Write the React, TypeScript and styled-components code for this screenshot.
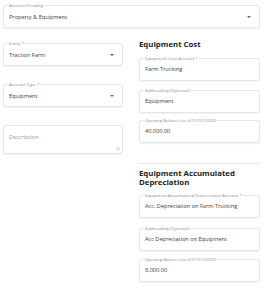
import styled, { createGlobalStyle } from 'styled-components';

const GlobalStyle = createGlobalStyle`
    body {
        margin: 0;
        background: #fff;
        font-family: 'Open Sans', 'Noto Sans', sans-serif;
        color: #333;
    }
`;

const Page = styled.div`
    width: 267px;
    height: 288px;
    box-sizing: border-box;
    padding: 5px 7px 0 3px;
    display: flex;
    flex-direction: column;
    overflow: hidden;
`;

const Columns = styled.div`
    display: grid;
    grid-template-columns: 120px 1fr;
    column-gap: 16px;
    margin-top: 12px;
`;

const Column = styled.div<{ $pt?: number }>`
    display: flex;
    flex-direction: column;
    padding-top: ${(p) => p.$pt ?? 0}px;
`;

const Box = styled.div<{ $mt?: number; $h?: number }>`
    position: relative;
    box-sizing: border-box;
    height: ${(p) => p.$h ?? 23}px;
    margin-top: ${(p) => p.$mt ?? 0}px;
    border: 1px solid #e6e6e6;
    border-radius: 3px;
    box-shadow: 0 0.5px 1.5px rgba(0, 0, 0, 0.06);
    display: flex;
    align-items: center;
    padding: 0 8px 0 5px;
    background: #fff;
`;

const Label = styled.span`
    position: absolute;
    top: -3px;
    left: 4px;
    padding: 0 1px;
    background: #fff;
    font-size: 4.3px;
    line-height: 5px;
    color: #8a8a8a;
    white-space: nowrap;
`;

const Value = styled.span`
    flex: 1;
    font-size: 5.6px;
    line-height: 8px;
    color: #3a3a3a;
    white-space: nowrap;
`;

const Placeholder = styled.span`
    position: absolute;
    top: 7px;
    left: 5px;
    font-size: 5.6px;
    line-height: 8px;
    color: #9a9a9a;
`;

const Arrow = styled.span`
    width: 0;
    height: 0;
    border-left: 2px solid transparent;
    border-right: 2px solid transparent;
    border-top: 2px solid #666;
`;

const Grip = styled.svg`
    position: absolute;
    right: 2px;
    bottom: 2px;
`;

const Heading = styled.h2<{ $mt?: number }>`
    margin: ${(p) => p.$mt ?? 0}px 0 0;
    font-size: 7.8px;
    line-height: 9.5px;
    font-weight: 700;
    color: #222;
`;

const Divider = styled.hr`
    margin: 20px 0 0;
    border: none;
    border-top: 1px solid #e8e8e8;
`;

interface FieldProps {
    label: string;
    value: string;
    select?: boolean;
    mt?: number;
}

const Field = ({ label, value, select, mt }: FieldProps) => (
    <Box $mt={mt}>
        <Label>{label}</Label>
        <Value>{value}</Value>
        {select && <Arrow />}
    </Box>
);

const App = () => {
    return (
        <Page>
            <GlobalStyle />
            <Field label="Account Heading" value="Property & Equipment" select />
            <Columns>
                <Column $pt={3}>
                    <Field label="Entity *" value="Traction Farm" select />
                    <Field label="Account Type *" value="Equipment" select mt={18} />
                    <Box $mt={18} $h={29}>
                        <Placeholder>Description</Placeholder>
                        <Grip width="5" height="5" viewBox="0 0 5 5">
                            <path d="M4.5 1 L1 4.5 M4.5 3 L3 4.5" stroke="#999" strokeWidth="0.6" />
                        </Grip>
                    </Box>
                </Column>
                <Column>
                    <Heading>Equipment Cost</Heading>
                    <Field label="Equipment Cost Account *" value="Farm Trucking" mt={8} />
                    <Field label="Subheading (Optional)" value="Equipment" mt={9} />
                    <Field label="Opening Balance (as of 01/01/2020)" value="40,000.00" mt={7} />
                    <Divider />
                    <Heading $mt={5}>
                        Equipment Accumulated
                        <br />
                        Depreciation
                    </Heading>
                    <Field
                        label="Equipment Accumulated Depreciation Account *"
                        value="Acc. Depreciation on Farm Trucking"
                        mt={7}
                    />
                    <Field label="Subheading (Optional)" value="Acc Depreciation on Equipment" mt={10} />
                    <Field label="Opening Balance (as of 01/01/2020)" value="8,000.00" mt={8} />
                </Column>
            </Columns>
        </Page>
    );
};

export default App;
